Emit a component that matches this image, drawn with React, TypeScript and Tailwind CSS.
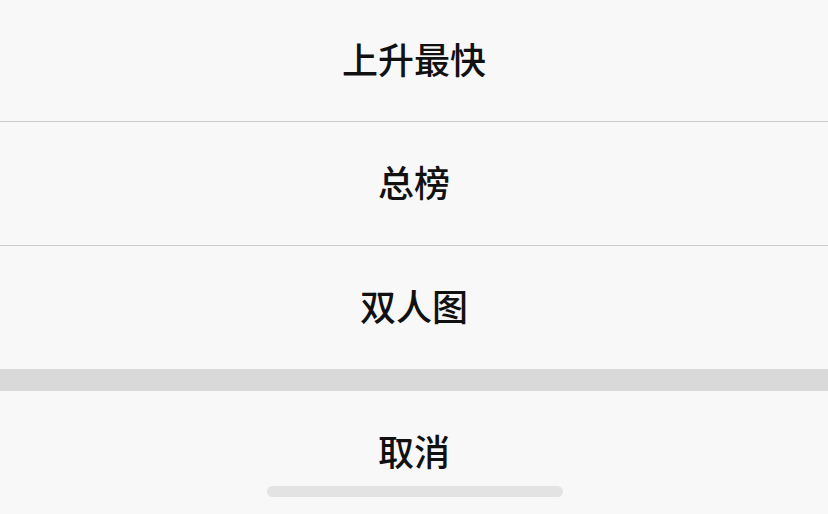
import React from 'react';

const options = ['上升最快', '总榜', '双人图'];

export default function App() {
  return (
    <div
      className="relative w-[828px] h-[514px] overflow-hidden bg-[#f8f8f8] text-[#111111]"
      style={{ fontFamily: '"Noto Sans CJK SC", "Noto Sans", sans-serif' }}
    >
      {options.map((label, i) => (
        <div
          key={label}
          className={
            i === 0
              ? 'flex h-[122px] items-center justify-center border-b border-[#cbcbcb] pb-[6px] text-[36px] font-medium'
              : i === 1
                ? 'flex h-[124px] items-center justify-center border-b border-[#cbcbcb] pb-[6px] text-[36px] font-medium'
                : 'flex h-[123px] items-center justify-center pb-[6px] text-[36px] font-medium'
          }
        >
          {label}
        </div>
      ))}
      <div className="h-[22px] bg-[#d9d9d9]" />
      <div className="flex h-[123px] items-center justify-center pb-[6px] text-[36px] font-medium">取消</div>
      {/* home indicator */}
      <div className="absolute bottom-[17px] left-[267px] h-[11px] w-[296px] rounded-full bg-[#e3e3e3]" />
    </div>
  );
}
